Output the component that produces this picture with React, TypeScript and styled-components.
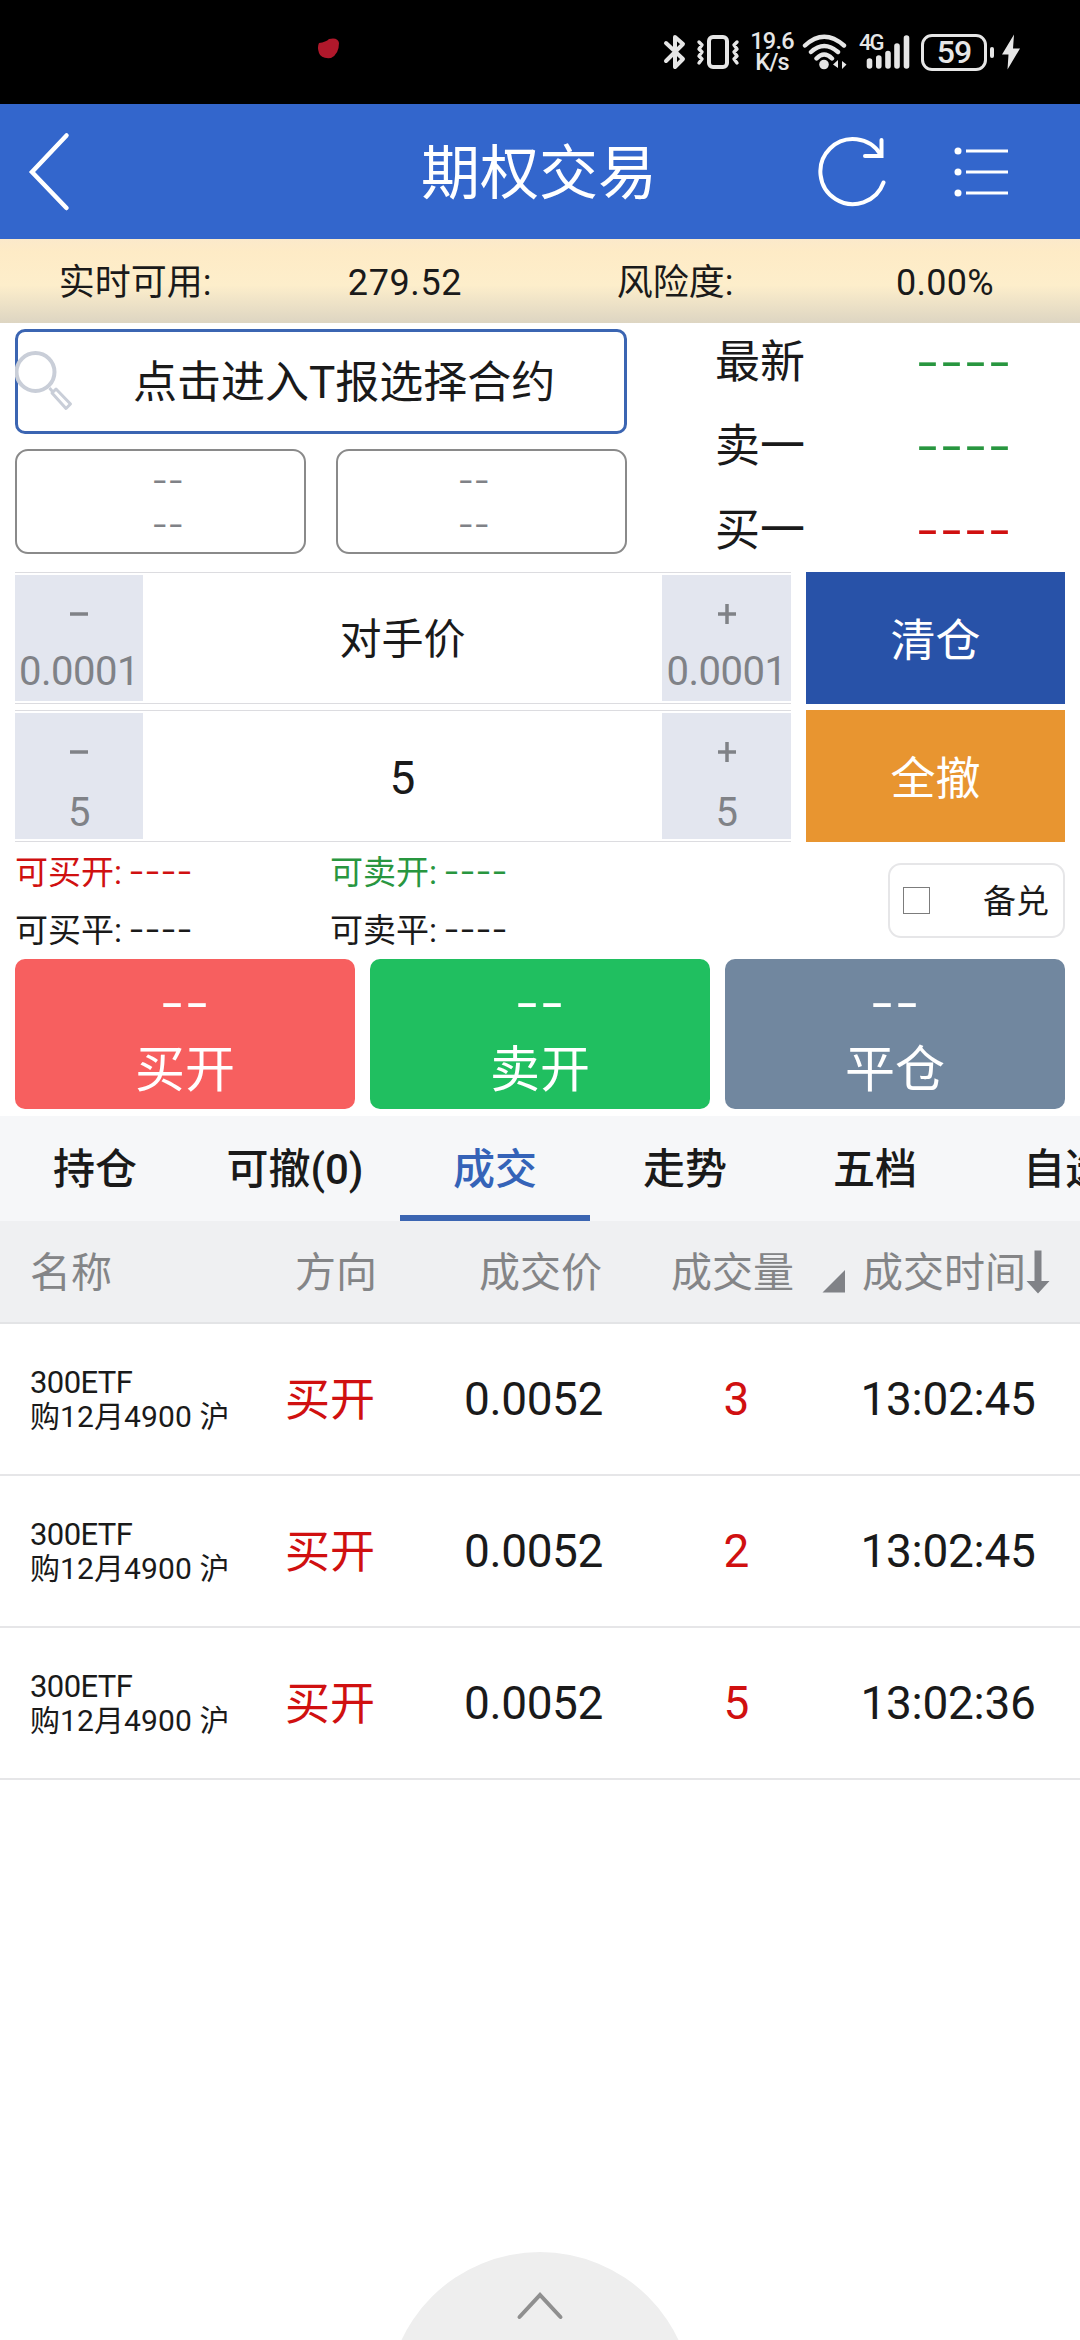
import React from 'react';
import styled, { createGlobalStyle } from 'styled-components';

const ink = '#1a1a1a';
const red = '#d01010';
const green = '#28963f';
const blue = '#3b65b2';
const grey = '#808287';

const GlobalStyle = createGlobalStyle`
  * { box-sizing: border-box; }
  body {
    margin: 0;
    background: #fff;
    color: ${ink};
    font-family: Roboto, "Noto Sans CJK SC", sans-serif;
  }
`;

const Screen = styled.div`
  width: 1080px;
  height: 2340px;
  display: flex;
  flex-direction: column;
  background: #fff;
  overflow: hidden;
`;

const Label = styled.span<{ $size: number; $color?: string; $space?: number; $weight?: number; $drop?: number }>`
  display: block;
  white-space: nowrap;
  line-height: 1;
  font-size: ${p => p.$size}px;
  color: ${p => p.$color ?? 'inherit'};
  letter-spacing: ${p => p.$space ?? 0}px;
  font-weight: ${p => p.$weight ?? 400};
  padding-top: ${p => p.$drop ?? p.$size * 0.08}px;
`;

const Dashes = styled.span<{ $size: number; $color?: string }>`
  display: inline-block;
  font-family: Inter, sans-serif;
  font-size: ${p => p.$size}px;
  line-height: 1;
  color: ${p => p.$color ?? 'inherit'};
  font-feature-settings: 'calt' 0;
  transform: scaleX(1.16);
`;

/* Status bar */
const StatusBar = styled.header`
  height: 104px;
  flex: none;
  background: #000;
  color: #e6e6e6;
  display: flex;
  align-items: center;
  padding-left: 319px;
`;

const RedDot = styled.svg`
  display: block;
  margin: -7px 322px 0 -2px;
`;

const StatusIcons = styled.div`
  display: flex;
  align-items: center;
`;

const Speed = styled.div`
  width: 46px;
  margin: 0 7px 0 9px;
  text-align: center;
  font-size: 23.5px;
  line-height: 21px;
  font-weight: 500;
  letter-spacing: -0.8px;
  white-space: nowrap;
`;

const Cellular = styled.div`
  position: relative;
  width: 52px;
  height: 36px;
  margin-left: 11px;
`;

const NetworkType = styled.span`
  position: absolute;
  left: 0;
  top: -2px;
  font-size: 22px;
  line-height: 22px;
  font-weight: 500;
  letter-spacing: -2px;
`;

const Battery = styled.div`
  width: 66px;
  height: 37px;
  margin-left: 10px;
  border: 3px solid #e6e6e6;
  border-radius: 11px;
  display: flex;
  align-items: center;
  justify-content: center;
  font-size: 32px;
  line-height: 31px;
  font-weight: 500;
  letter-spacing: -1px;
`;

const BatteryNub = styled.div`
  width: 4px;
  height: 11px;
  margin: 0 7px 0 3px;
  border-radius: 2px;
  background: #e6e6e6;
`;

/* Title bar */
const TitleBar = styled.div`
  height: 135px;
  flex: none;
  background: #3366cc;
  color: #fff;
  display: grid;
  grid-template-columns: 390px 298px 392px;
  align-items: center;
`;

const BackIcon = styled.svg`
  display: block;
  margin-left: 28px;
`;

const TitleText = styled.h1`
  margin: 0;
  font-weight: 400;
  justify-self: center;
`;

const TitleActions = styled.div`
  display: flex;
  align-items: center;
  gap: 66px;
  padding-left: 130px;
`;

/* Funds band */
const FundsBand = styled.div`
  height: 84px;
  flex: none;
  padding-top: 1px;
  background: linear-gradient(#fbe9cb 0%, #feebc6 15%, #fdeecb 55%, #ddd5c2 100%);
  display: grid;
  grid-template-columns: 270px 270px 270px 270px;
  align-items: center;
  justify-items: center;
`;

/* Quote area */
const QuoteArea = styled.section`
  height: 249px;
  flex: none;
  display: flex;
  padding: 6px 15px 0;
`;

const ContractColumn = styled.div`
  width: 612px;
  display: flex;
  flex-direction: column;
  gap: 15px;
`;

const SearchBox = styled.div`
  height: 105px;
  border: 3px solid ${blue};
  border-radius: 10px;
  display: flex;
  align-items: center;
`;

const SearchIcon = styled.svg`
  display: block;
  flex: none;
  margin: 0 58px 0 -3px;
`;

const PairRow = styled.div`
  display: flex;
  gap: 30px;
`;

const PairBox = styled.div<{ $side: 'left' | 'right' }>`
  flex: 1;
  height: 105px;
  padding-${p => p.$side}: 15px;
  border: 2px solid #8a8a8a;
  border-radius: 13px;
  color: ${grey};
  display: flex;
  flex-direction: column;
  align-items: center;
  justify-content: center;
  gap: 14px;
`;

const QuoteList = styled.div`
  flex: 1;
  padding-left: 88px;
  margin-top: -10px;
`;

const QuoteRow = styled.div`
  height: 84px;
  display: grid;
  grid-template-columns: 160px 180px;
  align-items: center;
`;

const QuoteValue = styled.div`
  display: flex;
  justify-content: center;
  padding: 0 3px 0 0;
`;

/* Steppers */
const StepperRow = styled.div`
  height: 132px;
  flex: none;
  margin: 0 15px 6px;
  display: flex;
  gap: 15px;
`;

const Stepper = styled.div`
  width: 776px;
  border-top: 1px solid #dcdce0;
  border-bottom: 1px solid #dcdce0;
  padding: 2px 0;
  display: grid;
  grid-template-columns: 128px 1fr 129px;
`;

const StepCell = styled.button`
  border: 0;
  padding: 16px 0 0;
  background: #e3e6ef;
  color: ${grey};
  font-family: inherit;
  display: flex;
  flex-direction: column;
  align-items: center;
`;

const StepSign = styled.svg`
  display: block;
  margin-bottom: 21px;
  margin-top: 12px;
`;

const StepValue = styled.div`
  display: flex;
  align-items: center;
  justify-content: center;
`;

const BlockButton = styled.button<{ $bg: string }>`
  flex: 1;
  border: 0;
  padding: 4px 0 0;
  background: ${p => p.$bg};
  color: #fff;
  font-family: inherit;
  display: flex;
  align-items: center;
  justify-content: center;
`;

/* Available volumes */
const AvailableRow = styled.div`
  height: 111px;
  flex: none;
  padding: 0 15px;
  display: flex;
  justify-content: space-between;
`;

const AvailableGrid = styled.div`
  display: grid;
  grid-template-columns: 315px 315px;
  grid-template-rows: 58px 58px;
  align-items: center;
  margin-top: -6px;
`;

const AvailableItem = styled.div<{ $color: string }>`
  display: flex;
  align-items: center;
  gap: 11px;
  color: ${p => p.$color};
`;

const CoveredToggle = styled.label`
  width: 177px;
  height: 75px;
  margin-top: 15px;
  border: 2px solid #e6e6e8;
  border-radius: 13px;
  display: flex;
  align-items: center;
  justify-content: space-between;
  padding: 0 14px 0 13px;
`;

const CheckSquare = styled.span`
  width: 27px;
  height: 27px;
  border: 1px solid #7c7c7c;
`;

/* Order buttons */
const OrderRow = styled.div`
  height: 150px;
  flex: none;
  margin: 0 15px 7px;
  display: flex;
  gap: 15px;
`;

const OrderButton = styled(BlockButton)`
  border-radius: 10px;
  flex-direction: column;
  justify-content: flex-start;
  padding-top: 20px;
  gap: 15px;
`;

/* Tabs */
const Tabs = styled.nav`
  height: 105px;
  flex: none;
  background: #f6f7f9;
  display: flex;
  overflow: hidden;
`;

const Tab = styled.div<{ $active?: boolean; $width?: number }>`
  flex: none;
  width: ${p => p.$width ?? 190}px;
  display: flex;
  align-items: center;
  justify-content: center;
  color: ${p => (p.$active ? '#3563b8' : ink)};
  border-bottom: 6px solid ${p => (p.$active ? blue : 'transparent')};
  padding-top: 6px;
`;

/* Deals table */
const TableHead = styled.div`
  height: 103px;
  flex: none;
  background: #eff0f2;
  border-bottom: 2px solid #e3e4e6;
  color: #848587;
  display: grid;
  grid-template-columns: 257px 214px 192px 159px 1fr;
  align-items: center;
`;

const HeadCell = styled.div<{ $left?: number }>`
  padding-left: ${p => p.$left ?? 0}px;
  display: flex;
  align-items: center;
`;

const SortCorner = styled.svg`
  display: block;
  margin: 18px 16px 0 0;
`;

const SortArrow = styled.svg`
  display: block;
  margin-top: 1px;
`;

const TableRow = styled.div`
  height: 152px;
  flex: none;
  border-bottom: 2px solid #e6e6e8;
  display: grid;
  grid-template-columns: 257px 146px 261px 145px 1fr;
  align-items: center;
`;

const NameCell = styled.div`
  padding: 0 0 2px 30px;
  display: flex;
  flex-direction: column;
  gap: 2px;
`;

const CenterCell = styled.div<{ $shift?: number }>`
  display: flex;
  justify-content: center;
  padding-left: ${p => p.$shift ?? 0}px;
`;

/* Pull-up handle */
const Footer = styled.footer`
  margin-top: auto;
  height: 88px;
  flex: none;
  display: flex;
  justify-content: center;
  overflow: hidden;
`;

const PullUp = styled.div`
  width: 306px;
  height: 306px;
  flex: none;
  border-radius: 50%;
  background: #eee;
  display: flex;
  justify-content: center;
  padding-top: 38px;
`;

const quotes = [
  { label: '最新', color: green },
  { label: '卖一', color: green },
  { label: '买一', color: red },
];

const steppers = [
  { value: '对手价', size: 42, step: '0.0001', drop: 6, action: '清仓', bg: '#2852a8' },
  { value: '5', size: 46, step: '5', drop: 9, action: '全撤', bg: '#e89530' },
];

const available = [
  { label: '可买开:', color: red },
  { label: '可卖开:', color: green },
  { label: '可买平:', color: ink },
  { label: '可卖平:', color: ink },
];

const orders = [
  { label: '买开', bg: '#f75f5f' },
  { label: '卖开', bg: '#20bf60' },
  { label: '平仓', bg: '#71879f' },
];

const tabs = [
  { label: '持仓' },
  { label: '可撤(0)', width: 210 },
  { label: '成交', active: true },
  { label: '走势' },
  { label: '五档' },
  { label: '自选' },
];

const deals = [
  { qty: '3', time: '13:02:45' },
  { qty: '2', time: '13:02:45' },
  { qty: '5', time: '13:02:36' },
];

function StatusIconSet() {
  return (
    <StatusIcons>
      <svg width="24" height="36" viewBox="0 0 24 36" fill="none" stroke="#e6e6e6" strokeWidth="4" strokeLinejoin="round" strokeLinecap="round">
        <path d="M3 9 L20 25 L12 33 V3 L20 10 L3 27" />
      </svg>
      <svg width="44" height="36" viewBox="0 0 44 36" fill="none" stroke="#e6e6e6" style={{ marginLeft: 9 }}>
        <rect x="13" y="3" width="18" height="30" rx="4" strokeWidth="4" />
        <path d="M3 8 L6 11 L3 15 L6 18 L3 22 L6 25 L3 29 M41 8 L38 11 L41 15 L38 18 L41 22 L38 25 L41 29" strokeWidth="3.400" strokeLinejoin="round" strokeLinecap="round" />
      </svg>
      <Speed>
        <div>19.6</div>
        <div>K/s</div>
      </Speed>
      <svg width="46" height="36" viewBox="0 0 46 36" fill="none" stroke="#e6e6e6" strokeWidth="4.400" strokeLinecap="round">
        <path d="M3 11.500 Q22 -6 42 11.500 M9 18 Q22 6 36 18 M14.500 24.500 Q22 16.500 30 24.500" />
        <circle cx="22" cy="30.500" r="4.800" fill="#e6e6e6" stroke="none" />
        <path d="M31 30.500 L36 26 V34 M40 35 V27 L44.500 30.500 Z" fill="#e6e6e6" stroke="none" />
      </svg>
      <Cellular>
        <NetworkType>4G</NetworkType>
        <svg width="52" height="36" viewBox="0 0 52 36" stroke="#e6e6e6" strokeWidth="5.600" strokeLinecap="round">
          <path d="M10.500 27 V32 M19.800 24 V32 M29 19.500 V32 M38 12 V32 M47.500 4 V32" />
        </svg>
      </Cellular>
      <Battery>59</Battery>
      <BatteryNub />
      <svg width="20" height="36" viewBox="0 0 20 36" fill="#e6e6e6">
        <path d="M13 0.500 L1 20.500 H7.500 L6.500 35.500 L19 14.500 H12 Z" />
      </svg>
    </StatusIcons>
  );
}

export default function App() {
  return (
    <Screen>
      <GlobalStyle />
      <StatusBar>
        <RedDot width="24" height="24" viewBox="0 0 24 24">
          <path d="M2 6 Q9 5 12 2 Q21 0 22 6 Q22 17 14 21 Q4 22 2 16 Q0 10 2 6 Z" fill="#b0182b" />
        </RedDot>
        <StatusIconSet />
      </StatusBar>

      <TitleBar>
        <BackIcon width="44" height="80" viewBox="0 0 44 80" fill="none" stroke="#fff" strokeWidth="4.500" strokeLinecap="round">
          <path d="M38.500 3.500 L4 40 L38.500 76" />
        </BackIcon>
        <TitleText>
          <Label $size={59}>期权交易</Label>
        </TitleText>
        <TitleActions>
          <svg width="70" height="72" viewBox="0 0 70 72" fill="none" stroke="#fff" strokeWidth="4" strokeLinecap="round">
            <path d="M65.500 46.500 A32.500 32.500 0 1 1 62.500 18.500" />
            <path d="M63.500 4 V20 H47" />
          </svg>
          <svg width="56" height="50" viewBox="0 0 56 50" fill="#fff">
            <circle cx="4" cy="4" r="3.500" />
            <circle cx="4" cy="25" r="3.500" />
            <circle cx="4" cy="46" r="3.500" />
            <path d="M12 2.500 H54 V5.500 H12 Z M12 23.500 H54 V26.500 H12 Z M12 44.500 H54 V47.500 H12 Z" />
          </svg>
        </TitleActions>
      </TitleBar>

      <FundsBand>
        <Label $size={36}>实时可用:</Label>
        <Label $size={36} $space={0.6}>279.52</Label>
        <Label $size={36}>风险度:</Label>
        <Label $size={36} $space={0.3}>0.00%</Label>
      </FundsBand>

      <QuoteArea>
        <ContractColumn>
          <SearchBox>
            <SearchIcon width="60" height="62" viewBox="0 0 60 62" fill="none" stroke="#c9ced8" strokeWidth="4">
              <circle cx="20.500" cy="21" r="19" />
              <path d="M34.500 37 L37.500 40.500 M37 42 L51 57.500 L55.500 53 L41 38 Z" strokeWidth="3" strokeLinejoin="round" />
            </SearchIcon>
            <Label $size={44}>点击进入T报选择合约</Label>
          </SearchBox>
          <PairRow>
            {(['left', 'right'] as const).map(side => (
              <PairBox key={side} $side={side}>
                <Dashes $size={30}>--</Dashes>
                <Dashes $size={30}>--</Dashes>
              </PairBox>
            ))}
          </PairRow>
        </ContractColumn>
        <QuoteList>
          {quotes.map(q => (
            <QuoteRow key={q.label}>
              <Label $size={45}>{q.label}</Label>
              <QuoteValue>
                <Dashes $size={45} $color={q.color}>----</Dashes>
              </QuoteValue>
            </QuoteRow>
          ))}
        </QuoteList>
      </QuoteArea>

      {steppers.map(s => (
        <StepperRow key={s.action}>
          <Stepper>
            <StepCell>
              <StepSign width="20" height="22" viewBox="0 0 20 22" stroke={grey} strokeWidth="3.500">
                <path d="M1 11 H19" />
              </StepSign>
              <Label $size={40} $space={-0.5} $drop={s.drop}>{s.step}</Label>
            </StepCell>
            <StepValue>
              <Label $size={s.size}>{s.value}</Label>
            </StepValue>
            <StepCell>
              <StepSign width="20" height="22" viewBox="0 0 20 22" stroke={grey} strokeWidth="3.500">
                <path d="M1 11 H19 M10 1 V21" />
              </StepSign>
              <Label $size={40} $space={-0.5} $drop={s.drop}>{s.step}</Label>
            </StepCell>
          </Stepper>
          <BlockButton $bg={s.bg}>
            <Label $size={45}>{s.action}</Label>
          </BlockButton>
        </StepperRow>
      ))}

      <AvailableRow>
        <AvailableGrid>
          {available.map(a => (
            <AvailableItem key={a.label} $color={a.color}>
              <Label $size={33}>{a.label}</Label>
              <Dashes $size={30}>----</Dashes>
            </AvailableItem>
          ))}
        </AvailableGrid>
        <CoveredToggle>
          <CheckSquare />
          <Label $size={33}>备兑</Label>
        </CoveredToggle>
      </AvailableRow>

      <OrderRow>
        {orders.map(o => (
          <OrderButton key={o.label} $bg={o.bg}>
            <Dashes $size={47}>--</Dashes>
            <Label $size={50}>{o.label}</Label>
          </OrderButton>
        ))}
      </OrderRow>

      <Tabs>
        {tabs.map(t => (
          <Tab key={t.label} $active={t.active} $width={t.width}>
            <Label $size={42} $weight={500}>{t.label}</Label>
          </Tab>
        ))}
      </Tabs>

      <TableHead>
        <HeadCell $left={30}><Label $size={41}>名称</Label></HeadCell>
        <HeadCell $left={38}><Label $size={41}>方向</Label></HeadCell>
        <HeadCell $left={8}><Label $size={41}>成交价</Label></HeadCell>
        <HeadCell $left={8}><Label $size={41}>成交量</Label></HeadCell>
        <HeadCell>
          <SortCorner width="24" height="24" viewBox="0 0 24 24" fill="#808287">
            <path d="M0.500 23.500 L23 1 V23.500 Z" />
          </SortCorner>
          <Label $size={41}>成交时间</Label>
          <SortArrow width="24" height="44" viewBox="0 0 24 44" fill="#808287">
            <path d="M8.500 0.500 H15.500 V31 H23.500 L12 43.500 L0.500 31 H8.500 Z" />
          </SortArrow>
        </HeadCell>
      </TableHead>

      {deals.map((d, i) => (
        <TableRow key={i}>
          <NameCell>
            <Label $size={31} $space={-0.6}>300ETF</Label>
            <Label $size={30} $space={0.1}>购12月4900 沪</Label>
          </NameCell>
          <CenterCell><Label $size={45} $color={red}>买开</Label></CenterCell>
          <CenterCell><Label $size={46} $space={-0.4} $drop={0}>0.0052</Label></CenterCell>
          <CenterCell><Label $size={46} $color={red} $drop={0}>{d.qty}</Label></CenterCell>
          <CenterCell $shift={7}><Label $size={46} $space={-0.3} $drop={0}>{d.time}</Label></CenterCell>
        </TableRow>
      ))}

      <Footer>
        <PullUp>
          <svg width="50" height="32" viewBox="0 0 50 32" fill="none" stroke="#8f8f8f" strokeWidth="4" strokeLinecap="round">
            <path d="M4.500 27 L25 5 L45.500 27" />
          </svg>
        </PullUp>
      </Footer>
    </Screen>
  );
}
